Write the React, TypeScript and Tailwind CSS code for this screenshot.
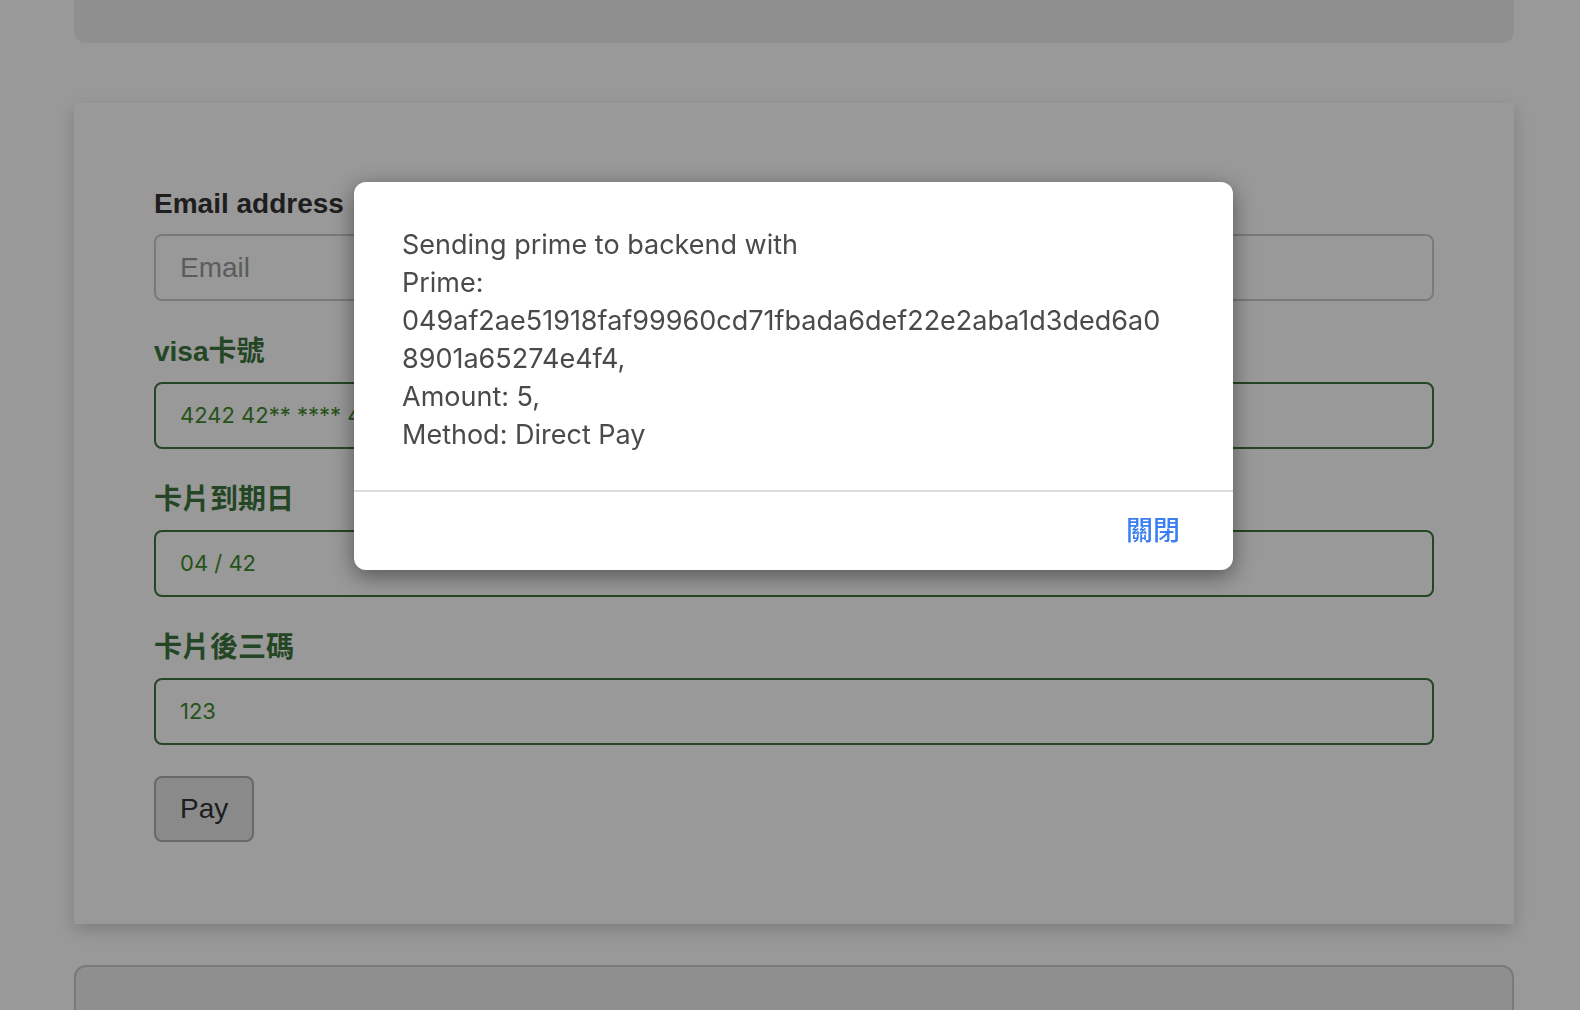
import React from 'react';

const font = { fontFamily: '"Liberation Sans", "Noto Sans CJK TC", sans-serif' };

function Field({ label, value, placeholder, success }: { label: string; value?: string; placeholder?: string; success?: boolean }) {
  return (
    <div className="mb-[31px]">
      <label
        className={`block mb-[10px] text-[28px] leading-[40px] font-bold ${success ? 'text-[#3c763d]' : 'text-[#333]'}`}
      >
        {label}
      </label>
      {success ? (
        <div className="h-[67px] w-full rounded-[8px] border-2 border-[#3c763d] px-[24px] flex items-center text-[22px] text-[#3f8a2c]" style={{ fontFamily: '"Inter", "Liberation Sans", sans-serif' }}>
          {value}
        </div>
      ) : (
        <div className="h-[67px] w-full rounded-[8px] border-2 border-[#ccc] bg-white px-[24px] flex items-center text-[28px] text-[#999]">
          {placeholder}
        </div>
      )}
    </div>
  );
}

export default function App() {
  return (
    <div className="relative h-screen overflow-hidden bg-white" style={font}>
      <div className="ml-[74px] w-[1440px] h-[43px] rounded-b-[12px] bg-[#eeeeee]" />

      <div className="ml-[74px] mt-[60px] w-[1440px] bg-white px-[80px] pt-[81px] pb-[82px] shadow-[0_6px_16px_rgba(0,0,0,0.18)]">
        <Field label="Email address" placeholder="Email" />
        <Field label="visa卡號" value="4242 42** **** 4242" success />
        <Field label="卡片到期日" value="04 / 42" success />
        <Field label="卡片後三碼" value="123" success />
        <button className="h-[66px] rounded-[8px] border-2 border-[#adadad] bg-[#e6e6e6] px-[24px] text-[28px] leading-[40px] text-[#333]">
          Pay
        </button>
      </div>

      <div className="ml-[74px] mt-[41px] w-[1440px] h-[200px] rounded-t-[12px] border-2 border-[#cccccc] bg-[#eeeeee]" />

      <div className="fixed inset-0 bg-black/40" />

      <div className="absolute left-[354px] top-[182px] w-[879px] rounded-[12px] bg-white shadow-[0_6px_22px_rgba(0,0,0,0.45)]">
        <div
          className="pl-[48px] pr-[60px] pt-[44px] pb-[36px] text-[27px] leading-[38px] text-[#4a4a4a] break-all"
          style={{ fontFamily: '"Inter", "Liberation Sans", sans-serif' }}
        >
          <div>Sending prime to backend with</div>
          <div>Prime:</div>
          <div>049af2ae51918faf99960cd71fbada6def22e2aba1d3ded6a08901a65274e4f4,</div>
          <div>Amount: 5,</div>
          <div>Method: Direct Pay</div>
        </div>
        <div className="h-[2px] bg-[#dcdcdc]" />
        <div className="h-[78px] flex items-center justify-end pr-[53px]">
          <button className="text-[27px] font-medium text-[#3b7ff2] pb-[4px]" style={{ fontFamily: '"Noto Sans CJK TC", sans-serif' }}>
            關閉
          </button>
        </div>
      </div>
    </div>
  );
}
